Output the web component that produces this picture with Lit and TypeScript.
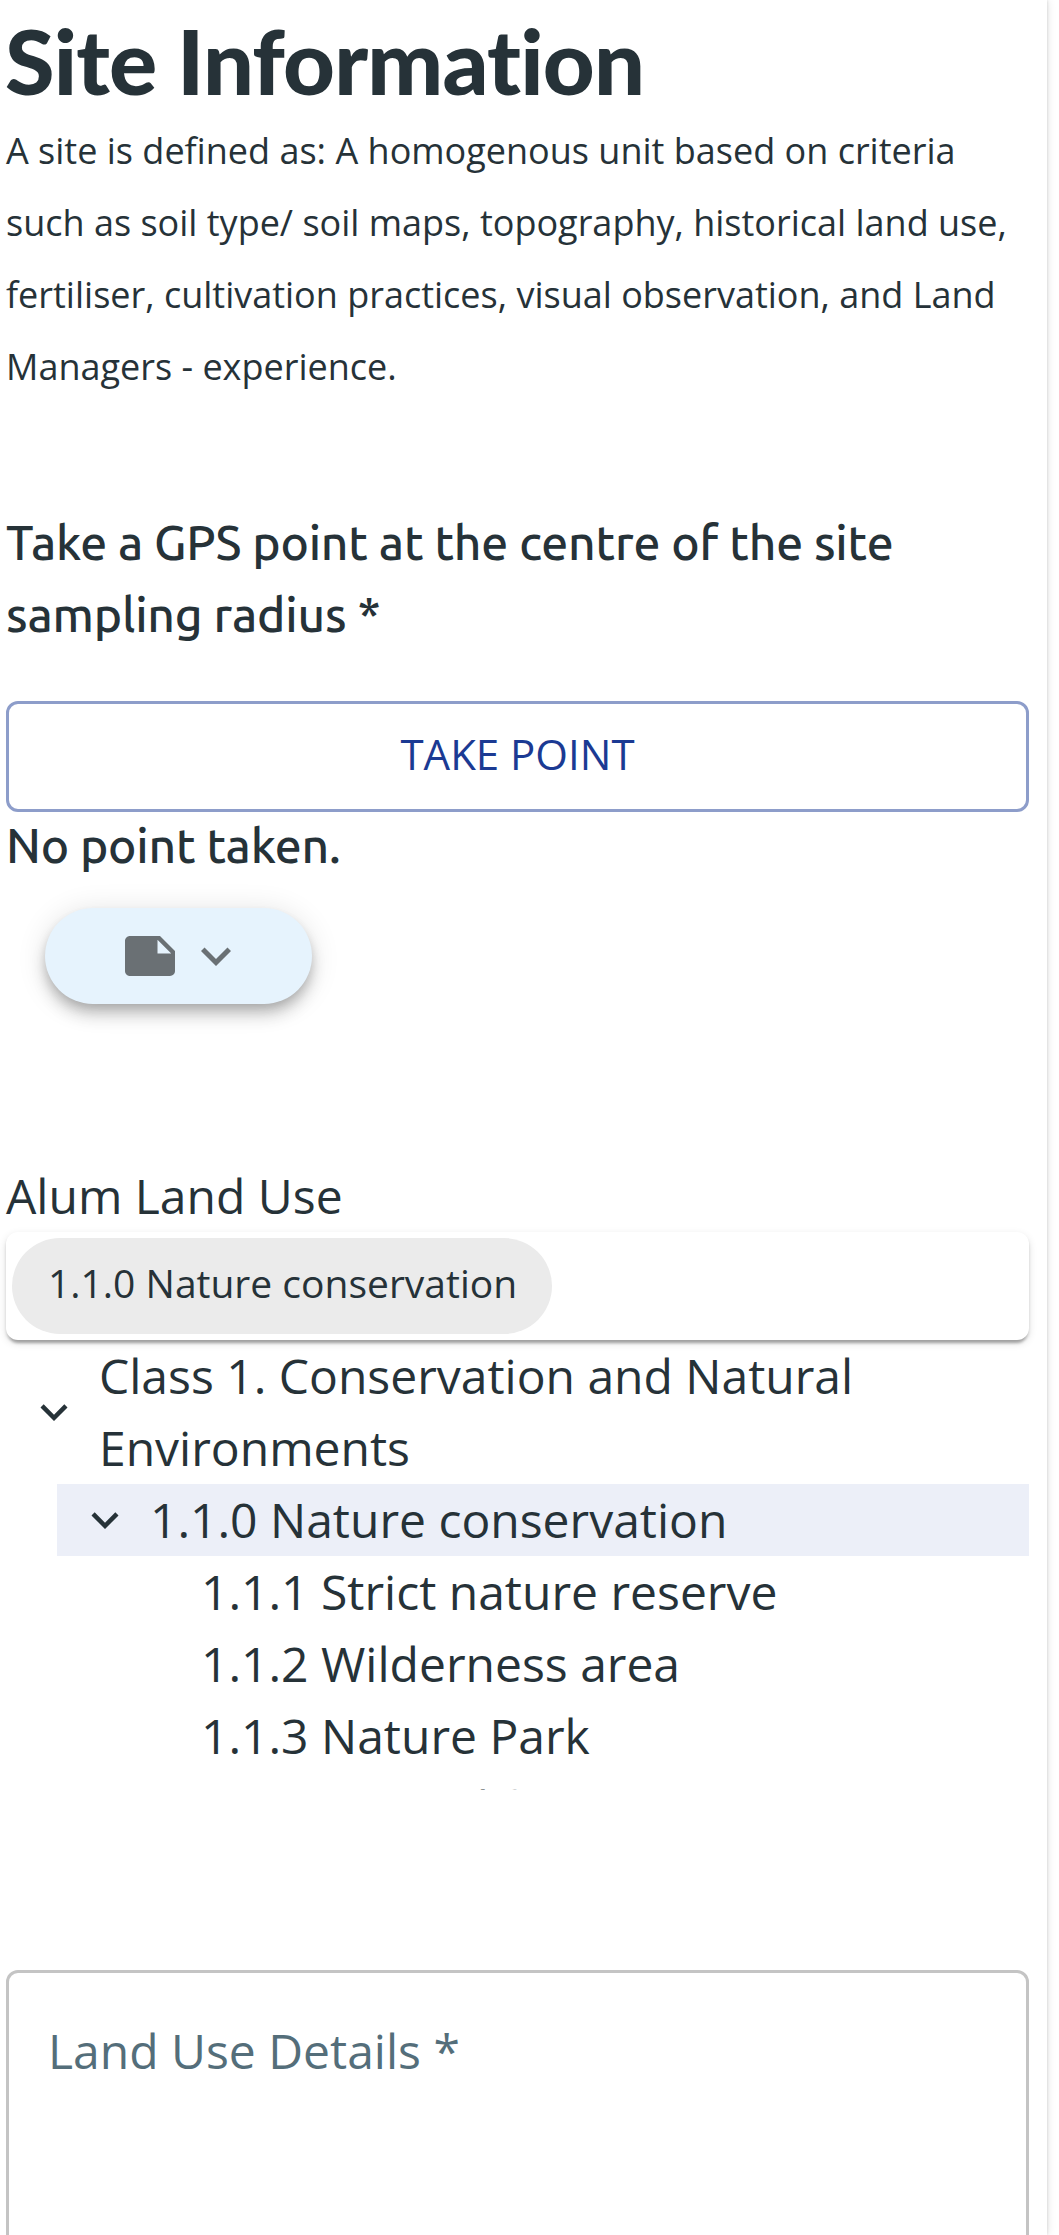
import { LitElement, html, css, svg } from "lit";
import { customElement } from "lit/decorators.js";

const chevron = html`<svg class="chevron" viewBox="0 0 24 24" aria-hidden="true">${svg`<path d="M16.59 8.59 12 13.17 7.41 8.59 6 10l6 6 6-6z"/>`}</svg>`;
const note = html`<svg class="note-icon" viewBox="0 0 24 24" aria-hidden="true">${svg`<path d="M22 10l-6-6H4c-1.1 0-2 .9-2 2v12.01c0 1.1.9 1.99 2 1.99l16-.01c1.1 0 2-.89 2-1.99v-8zm-7-4.5l5.5 5.5H15V5.5z"/>`}</svg>`;

const leaves = ["1.1.1 Strict nature reserve", "1.1.2 Wilderness area", "1.1.3 Nature Park", "1.1.4 Natural feature protection"];

@customElement("app-root")
export class AppRoot extends LitElement {
  static styles = css`
    :host { display: block; height: 2235px; overflow: hidden; background: #fff; color: #263238; font-family: "Open Sans", sans-serif; }
    * { box-sizing: border-box; }
    .page { width: 1047px; height: 2235px; padding: 0 18px 0 6px; overflow: hidden; background: #fff;
      box-shadow: 0 0 3px rgba(0,0,0,.14), 0 0 9px rgba(0,0,0,.12); }
    h1 { margin: 0 0 0 -1px; padding-top: 6px; font: 900 90px/108px Lato, sans-serif; letter-spacing: -.8px; height: 115px; white-space: nowrap; }
    .intro { margin: 0; font-size: 36px; line-height: 72px; white-space: nowrap; }
    .question { margin: 103px 0 0; font-family: Ubuntu, "Noto Sans", sans-serif; font-size: 48px; font-weight: 500; letter-spacing: -.2px; line-height: 72px; white-space: nowrap; }
    .take { display: flex; align-items: center; justify-content: center; width: 100%; height: 111px; margin: 51px 0 0; padding: 0 0 6px; border: 3px solid #8d9dca; border-radius: 12px; background: #fff; color: #1b3a93; font: 42px "Open Sans", sans-serif; }
    .status { margin-top: 1px; font-family: Ubuntu, "Noto Sans", sans-serif; font-size: 48px; font-weight: 500; letter-spacing: -.2px; line-height: 65px; }
    .note { display: flex; align-items: center; gap: 6px; width: 267px; height: 96px; margin: 30px 0 0 39px; padding: 0 0 0 75px; border: 0; border-radius: 48px; background: #e6f3fd; color: rgba(0,0,0,.54);
      box-shadow: 0 6px 12px -3px rgba(0,0,0,.2), 0 12px 15px rgba(0,0,0,.14), 0 3px 30px rgba(0,0,0,.12); }
    svg { display: block; flex: none; fill: currentColor; }
    .note-icon, .note .chevron { width: 60px; height: 60px; }
    .label { margin-top: 156px; font-size: 48px; line-height: 72px; }
    .select { height: 108px; border-radius: 12px; padding: 6px; background: #fff;
      box-shadow: 0 6px 3px -3px rgba(0,0,0,.2), 0 3px 3px rgba(0,0,0,.14), 0 3px 9px rgba(0,0,0,.12); }
    .chip { display: flex; align-items: center; width: 540px; height: 96px; padding: 0 0 8px 36px; border-radius: 48px; background: #ebebeb; font-size: 39px; white-space: nowrap; }
    .tree { height: 450px; overflow: hidden; font-size: 48px; line-height: 72px; }
    .row { display: flex; align-items: center; gap: 18px; white-space: nowrap; }
    .row .chevron { width: 54px; height: 54px; }
    .l1 { padding-left: 21px; }
    .l2 { margin-left: 51px; padding-left: 21px; background: #eceff8; }
    .l3 { padding-left: 195px; }
    .field { margin-top: 180px; height: 500px; border: 3px solid #c4c4c4; border-radius: 12px; padding: 42px 39px; color: #546e7a; font-size: 48px; line-height: 72px; }
  `;

  render() {
    return html`<main class="page">
      <h1>Site Information</h1>
      <p class="intro">A site is defined as: A homogenous unit based on criteria<br>such as soil type/ soil maps, topography, historical land use,<br>fertiliser, cultivation practices, visual observation, and Land<br>Managers - experience.</p>
      <p class="question">Take a GPS point at the centre of the site<br>sampling radius *</p>
      <button class="take">TAKE POINT</button>
      <div class="status">No point taken.</div>
      <button class="note">${note}${chevron}</button>
      <div class="label">Alum Land Use</div>
      <div class="select"><div class="chip">1.1.0 Nature conservation</div></div>
      <div class="tree">
        <div class="row l1">${chevron}<span>Class 1. Conservation and Natural<br>Environments</span></div>
        <div class="row l2">${chevron}<span>1.1.0 Nature conservation</span></div>
        ${leaves.map((t) => html`<div class="row l3">${t}</div>`)}
      </div>
      <div class="field">Land Use Details *</div>
    </main>`;
  }
}
